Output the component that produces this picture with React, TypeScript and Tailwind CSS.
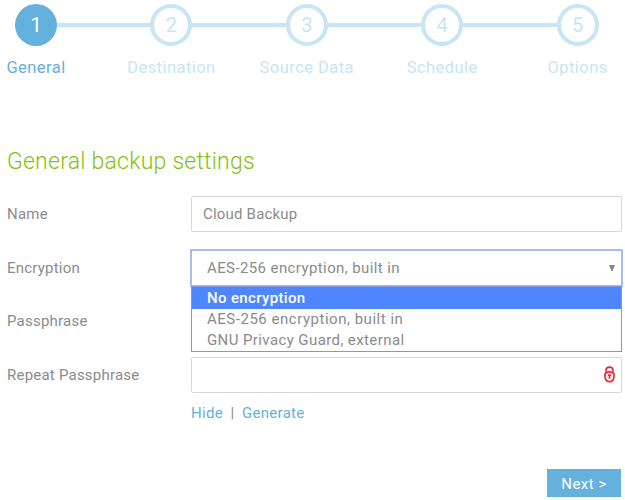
import React from 'react';
import { clsx } from 'clsx';

const steps = ['General', 'Destination', 'Source Data', 'Schedule', 'Options'];

const options = [
  { text: 'No encryption', className: 'h-[22px] bg-[#4d86ff] text-white leading-[22px] font-medium tracking-[0.35px]' },
  { text: 'AES-256 encryption, built in', className: 'h-[21px] leading-[21px] tracking-[0.52px]' },
  { text: 'GNU Privacy Guard, external', className: 'h-[21px] leading-[21px] tracking-[0.4px]' },
];

function Steps() {
  return (
    <ol className="flex h-[85px] w-[677px] -ml-[31.7px] pt-1">
      {steps.map((step, i) => (
        <li key={step} className="flex w-[135.4px] shrink-0 flex-col items-center">
          <div className="flex w-full items-center">
            <span className={clsx('h-1 flex-1', i > 0 && 'bg-[#c6e5f7]')} />
            <span
              className={clsx(
                'flex size-[42px] items-center justify-center rounded-full text-[20px] leading-none',
                i === 0 ? 'bg-[#65b1dd] text-white' : 'border-4 border-[#c6e5f7] text-[#c6e5f7]'
              )}
            >
              {i + 1}
            </span>
            <span className={clsx('h-1 flex-1', i < steps.length - 1 && 'bg-[#c6e5f7]')} />
          </div>
          <span
            className={clsx(
              'mt-[10px] text-[16.5px] leading-6 tracking-[0.45px] whitespace-nowrap',
              i === 0 ? 'text-[#65b1dd]' : 'text-[#c6e5f7]'
            )}
          >
            {step}
          </span>
        </li>
      ))}
    </ol>
  );
}

function Row({ label, children }: { label: string; children: React.ReactNode }) {
  return (
    <div className="flex h-9 items-center">
      <span className="w-[184px] shrink-0 pt-px text-[15px] tracking-[0.22px]">{label}</span>
      {children}
    </div>
  );
}

function LockIcon() {
  return (
    <svg width="11" height="17" viewBox="0 0 11 17" fill="none" stroke="#ee2637" strokeWidth="1.7">
      <path d="M2 5.8V4.2C2 2.2 3.4 1.2 5.5 1.2S9 2.2 9 4.2V5.8" />
      <path d="M1 8.2C1.6 6.7 3.3 5.9 5.5 5.9S9.4 6.7 10 8.2V10.8C9.7 13.6 7.9 15.6 5.5 15.6S1.3 13.6 1 10.8z" />
      <path d="M4 9.2h3M5.5 9v3.8" />
    </svg>
  );
}

export default function App() {
  return (
    <div className="h-[500px] w-[625px] overflow-hidden bg-white font-['Roboto','Noto_Sans',sans-serif] text-[#8b8b8b]">
      <Steps />

      <main className="pl-[7px] pr-[3px]">
        <h2 className="mt-[61px] text-[23px] leading-8 font-light tracking-[0.24px] text-[#86bf0f]">
          General backup settings
        </h2>

        <div className="mt-[18px] flex flex-col gap-[17.6px]">
          <Row label="Name">
            <div className="flex h-9 flex-1 items-center rounded-[2px] border border-[#d8d8d8] px-[11px] pt-px text-[15px] tracking-[0.2px]">
              Cloud Backup
            </div>
          </Row>

          <Row label="Encryption">
            <div className="relative -mx-px flex h-[38px] flex-1 items-center justify-between border-2 border-[#a5bff0] pl-[15px] pr-1.5 text-[15px]">
              <span className="pt-px tracking-[0.4px]">AES-256 encryption, built in</span>
              <svg width="6" height="6" viewBox="0 0 6 6" fill="#858585">
                <path d="M0 0h6L3.5 6h-1z" />
              </svg>
              <ul className="absolute -inset-x-px top-[35px] z-10 border border-[#7f98dc] bg-white">
                {options.map((option) => (
                  <li key={option.text} className={clsx('pl-[15px]', option.className)}>
                    {option.text}
                  </li>
                ))}
              </ul>
            </div>
          </Row>

          <Row label="Passphrase">
            <div className="h-9 flex-1 rounded-[2px] border border-[#d8d8d8]" />
          </Row>

          <Row label="Repeat Passphrase">
            <div className="flex h-9 flex-1 items-center justify-end rounded-[2px] border border-[#d8d8d8] pr-1.5">
              <LockIcon />
            </div>
          </Row>
        </div>

        <div className="mt-2 flex pl-[184px] text-[15px] leading-6 tracking-[0.3px] text-[#65b1dd]">
          <span>Hide</span>
          <span className="mx-[7.5px] text-[#8b8b8b]">|</span>
          <span>Generate</span>
        </div>

        <div className="mt-11 flex justify-end pr-px">
          <button className="h-7 w-[74px] bg-[#65b1dd] pt-px text-[15px] leading-7 tracking-[0.5px] text-white">
            Next &gt;
          </button>
        </div>
      </main>
    </div>
  );
}
